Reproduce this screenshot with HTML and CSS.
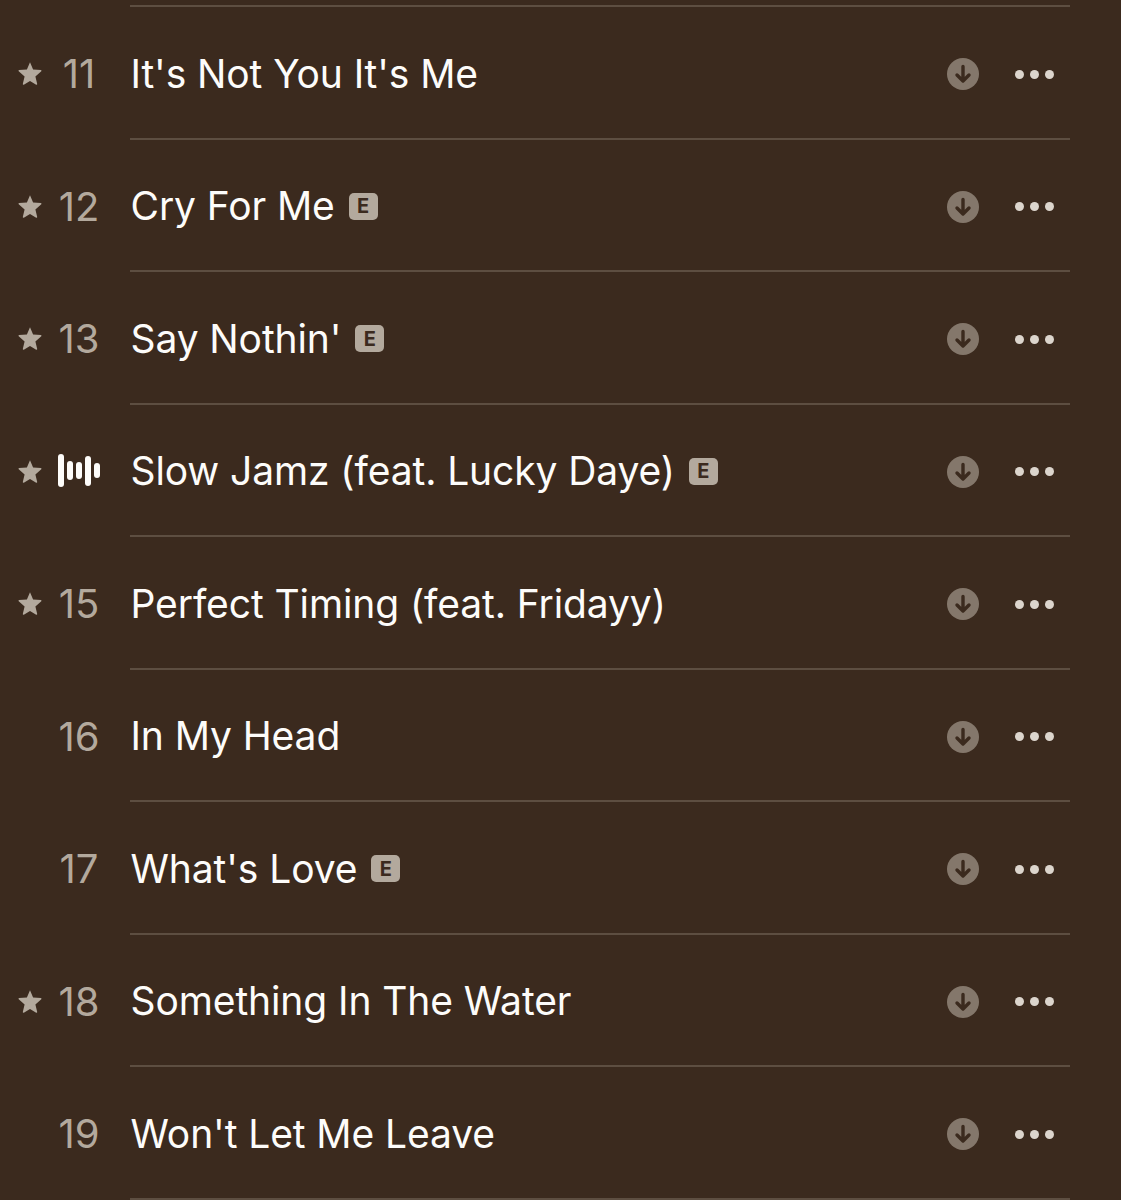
FILE: index.html
```html
<!DOCTYPE html>
<html lang="en">
<head>
  <meta charset="UTF-8" />
  <title>Tracks</title>
  <link rel="stylesheet" href="styles.css">
</head>
<body>

<svg class="sprites" width="0" height="0" aria-hidden="true">
  <symbol id="star" viewBox="0 0 24 24">
    <path d="M12 1.2l3.1 7.2 7.8.7c.6.1.8.8.4 1.2l-5.9 5.1 1.8 7.6c.1.6-.5 1-1 .7L12 20l-6.2 3.7c-.5.3-1.1-.1-1-.7l1.8-7.6-5.9-5.1c-.4-.4-.2-1.1.4-1.2l7.8-.7z"/>
  </symbol>
  <symbol id="download" viewBox="0 0 32 32">
    <circle cx="16" cy="16" r="16" fill="#84776b"/>
    <path d="M16 8.5v14M10 17l6 6 6-6" fill="none" stroke="#3b2a1e" stroke-width="3.4" stroke-linecap="round" stroke-linejoin="round"/>
  </symbol>
</svg>

<main class="tracks">
  <div class="top-line"></div>
  <div class="row">
    <div class="fav"><svg class="star"><use href="#star"/></svg></div>
    <div class="num">11</div>
    <div class="body">
      <span class="title">It's Not You It's Me</span>
      <svg class="dl"><use href="#download"/></svg>
      <div class="more"><i></i><i></i><i></i></div>
    </div>
  </div>
  <div class="row">
    <div class="fav"><svg class="star"><use href="#star"/></svg></div>
    <div class="num">12</div>
    <div class="body">
      <span class="title">Cry For Me</span><span class="explicit">E</span>
      <svg class="dl"><use href="#download"/></svg>
      <div class="more"><i></i><i></i><i></i></div>
    </div>
  </div>
  <div class="row">
    <div class="fav"><svg class="star"><use href="#star"/></svg></div>
    <div class="num">13</div>
    <div class="body">
      <span class="title">Say Nothin'</span><span class="explicit">E</span>
      <svg class="dl"><use href="#download"/></svg>
      <div class="more"><i></i><i></i><i></i></div>
    </div>
  </div>
  <div class="row">
    <div class="fav"><svg class="star"><use href="#star"/></svg></div>
    <div class="num">
      <div class="playing"><b class="bar1"></b><b class="bar2"></b><b class="bar3"></b><b class="bar4"></b><b class="bar5"></b></div>
    </div>
    <div class="body">
      <span class="title">Slow Jamz (feat. Lucky Daye)</span><span class="explicit">E</span>
      <svg class="dl"><use href="#download"/></svg>
      <div class="more"><i></i><i></i><i></i></div>
    </div>
  </div>
  <div class="row">
    <div class="fav"><svg class="star"><use href="#star"/></svg></div>
    <div class="num">15</div>
    <div class="body">
      <span class="title">Perfect Timing (feat. Fridayy)</span>
      <svg class="dl"><use href="#download"/></svg>
      <div class="more"><i></i><i></i><i></i></div>
    </div>
  </div>
  <div class="row">
    <div class="fav"></div>
    <div class="num">16</div>
    <div class="body">
      <span class="title">In My Head</span>
      <svg class="dl"><use href="#download"/></svg>
      <div class="more"><i></i><i></i><i></i></div>
    </div>
  </div>
  <div class="row">
    <div class="fav"></div>
    <div class="num">17</div>
    <div class="body">
      <span class="title">What's Love</span><span class="explicit">E</span>
      <svg class="dl"><use href="#download"/></svg>
      <div class="more"><i></i><i></i><i></i></div>
    </div>
  </div>
  <div class="row">
    <div class="fav"><svg class="star"><use href="#star"/></svg></div>
    <div class="num">18</div>
    <div class="body">
      <span class="title">Something In The Water</span>
      <svg class="dl"><use href="#download"/></svg>
      <div class="more"><i></i><i></i><i></i></div>
    </div>
  </div>
  <div class="row">
    <div class="fav"></div>
    <div class="num">19</div>
    <div class="body">
      <span class="title">Won't Let Me Leave</span>
      <svg class="dl"><use href="#download"/></svg>
      <div class="more"><i></i><i></i><i></i></div>
    </div>
  </div>
</main>

</body>
</html>
```

FILE: styles.css
```css
:root {
  --bg: #3b2a1e;
  --line: #5d4e41;
  --muted: #b3a99d;
  --text: #fdfcfa;
}

html, body {
  margin: 0;
  padding: 0;
  height: 1200px;
  overflow: hidden;
  background-color: var(--bg);
}

body {
  font-family: Inter, "Liberation Sans", sans-serif;
  color: var(--text);
}

.sprites {
  display: block;
  height: 0;
}

.tracks {
  padding-top: 5px;
  padding-right: 51px;
}

.top-line {
  height: 2px;
  margin-left: 130px;
  background-color: var(--line);
}

.row {
  display: flex;
  height: 132.5px;
}

.fav {
  width: 60px;
  padding-left: 18px;
  box-sizing: border-box;
  display: flex;
  align-items: center;
  flex: none;
}

.star {
  width: 24px;
  height: 24px;
  fill: var(--muted);
}

.num {
  width: 38px;
  flex: none;
  margin-right: 32px;
  padding-top: 1px;
  display: flex;
  align-items: center;
  justify-content: center;
  font-size: 40px;
  color: var(--muted);
}

.playing {
  display: flex;
  align-items: center;
  gap: 3.5px;
  margin-top: -1px;
}

.playing b {
  display: block;
  width: 5.5px;
  border-radius: 3px;
  background-color: var(--text);
  flex: none;
}

.bar1 { height: 33px; }
.bar2 { height: 19px; }
.bar3 { height: 17px; }
.bar4 { height: 30px; }
.bar5 { height: 15px; }

.body {
  flex: 1;
  display: flex;
  align-items: center;
  padding-top: 2px;
  border-bottom: 2px solid var(--line);
  box-sizing: border-box;
}

.title {
  font-size: 39px;
  letter-spacing: -0.1px;
  white-space: nowrap;
  margin-left: 0.5px;
}

.explicit {
  width: 29px;
  height: 27px;
  margin-left: 14px;
  margin-top: 1px;
  border-radius: 5px;
  background-color: var(--muted);
  color: var(--bg);
  font-size: 20px;
  font-weight: 700;
  display: flex;
  align-items: center;
  justify-content: center;
}

.dl {
  width: 32px;
  height: 32px;
  margin-left: auto;
  margin-top: 2px;
}

.more {
  display: flex;
  gap: 6px;
  margin-left: 36px;
  margin-right: 16px;
  margin-top: 2px;
}

.more i {
  display: block;
  width: 9px;
  height: 9px;
  border-radius: 50%;
  background-color: #dcd5cd;
}
```
